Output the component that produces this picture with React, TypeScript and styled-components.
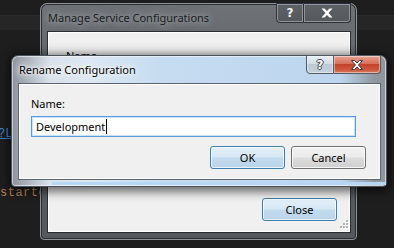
import React from 'react';
import styled, { createGlobalStyle, css } from 'styled-components';

const uiFont = `"Noto Sans", "Liberation Sans", sans-serif`;

const GlobalStyle = createGlobalStyle`
    html, body {
        margin: 0;
        padding: 0;
        background: #1e1e1e;
    }
`;

const Styled = {
    Desktop: styled.div`
        position: relative;
        width: 394px;
        height: 248px;
        overflow: hidden;
        background: #1e1e1e;
        font-family: ${uiFont};
    `,
    Editor: styled.div`
        display: flex;
        flex-direction: column;
        font-family: "Liberation Mono", "DejaVu Sans Mono", monospace;
        font-size: 12px;
    `,
    CurrentLine: styled.div`
        margin-top: 15px;
        height: 14px;
        background: #262626;
        border-top: 1px solid #2a2a2a;
    `,
    LinkLine: styled.div`
        margin-top: 97px;
        height: 14px;
        line-height: 14px;
        text-indent: -2px;
        color: #3d8fd8;
        text-decoration: underline;
    `,
    CodeLine: styled.div`
        margin-top: 45px;
        height: 14px;
        line-height: 14px;
        color: #c08457;
        letter-spacing: 0.5px;
    `,
    Frame: styled.div<{ $active?: boolean }>`
        position: absolute;
        box-sizing: border-box;
        display: flex;
        flex-direction: column;
        padding: 0 5px 6px 6px;
        border-radius: 7px 7px 4px 4px;
        ${(p) =>
            p.$active
                ? css`
                      border: 1px solid #4a525b;
                      background: linear-gradient(
                          to right,
                          #8c939b 0%,
                          #d9e1ea 10%,
                          #dde8f3 20%,
                          #c6dcf1 40%,
                          #bcd5ee 88%,
                          #8f969d 97%
                      );
                      box-shadow: inset 0 0 0 1px rgba(255, 255, 255, 0.55), 0 2px 10px 3px rgba(0, 0, 0, 0.55);
                  `
                : css`
                      border: 1px solid #8d9297;
                      background: linear-gradient(to bottom, #6f7378 0%, #5c6065 40%, #55595e 100%);
                      box-shadow: inset 0 0 0 1px #2a2d31;
                  `}
    `,
    BottomGlow: styled.div`
        position: absolute;
        left: 40px;
        right: 0;
        bottom: 1px;
        height: 3px;
        background: #b6d6f5;
    `,
    TitleBar: styled.div`
        height: 27px;
        display: flex;
        align-items: flex-start;
        justify-content: space-between;
    `,
    Title: styled.div<{ $active?: boolean }>`
        padding: 5px 0 0 1px;
        font-size: 11px;
        line-height: 17px;
        white-space: nowrap;
        color: ${(p) => (p.$active ? '#000' : '#1b1d20')};
        text-shadow: ${(p) =>
            p.$active
                ? '0 0 6px #fff, 0 0 10px #fff, 0 0 3px #fff'
                : '0 0 6px rgba(190, 195, 200, 0.8), 0 0 10px rgba(190, 195, 200, 0.6)'};
    `,
    CaptionButtons: styled.div`
        display: flex;
        margin-top: -1px;
    `,
    CaptionButton: styled.div<{ $active?: boolean; $kind: 'help' | 'close' }>`
        box-sizing: border-box;
        display: flex;
        align-items: center;
        justify-content: center;
        height: ${(p) => (p.$active ? 19 : 20)}px;
        width: ${(p) => (p.$kind === 'help' ? 28 : 47)}px;
        border-radius: ${(p) => (p.$kind === 'help' ? '0 0 0 4px' : '0 0 4px 0')};
        font-family: "DejaVu Sans", sans-serif;
        font-weight: bold;
        font-size: 12px;
        ${(p) =>
            p.$active
                ? css`
                      border: 1px solid #545a61;
                      color: #fff;
                      text-shadow: 1px 0 0 #444, -1px 0 0 #444, 0 1px 0 #444, 0 -1px 0 #444;
                      background: ${p.$kind === 'help'
                          ? 'linear-gradient(to bottom, #e7eef5 0%, #d3dde8 45%, #bccad8 50%, #c3d0dd 100%)'
                          : 'linear-gradient(to bottom, #e7a493 0%, #d6705a 45%, #c2432b 50%, #cd563c 80%, #d97b5f 100%)'};
                      box-shadow: inset 0 0 0 1px rgba(255, 255, 255, 0.45);
                  `
                : css`
                      border: 1px solid #2d3034;
                      color: #f4f4f4;
                      background: linear-gradient(to bottom, #5e6267 0%, #55595e 100%);
                      box-shadow: inset 0 0 0 1px #8f959b;
                  `}
        ${(p) =>
            p.$kind === 'close' &&
            css`
                border-left: none;
            `}
    `,
    Client: styled.div<{ $active?: boolean }>`
        position: relative;
        flex: 1;
        display: flex;
        flex-direction: column;
        background: #f0f0f0;
        border: 1px solid ${(p) => (p.$active ? '#5b6470' : '#2a2e32')};
        box-shadow: inset 0 0 0 1px #ffffff;
        font-size: 11px;
        color: #000;
    `,
    RenameBody: styled.div`
        display: flex;
        flex-direction: column;
        padding: 12px 14px 0 12px;
    `,
    Label: styled.div`
        font-size: 11px;
        line-height: 16px;
    `,
    TextBox: styled.div`
        box-sizing: border-box;
        margin: 4px 10px 0 0;
        height: 21px;
        display: flex;
        align-items: center;
        padding: 0 4px;
        background: #fff;
        border: 1px solid #5a9ddf;
        box-shadow: inset 0 0 0 1px #c7e2f8;
        font-size: 11px;
    `,
    Caret: styled.span`
        display: inline-block;
        width: 1px;
        height: 15px;
        margin-left: 1px;
        background: #000;
    `,
    ButtonRow: styled.div`
        display: flex;
        justify-content: flex-end;
        gap: 6px;
        margin-top: 9px;
    `,
    Button: styled.div<{ $default?: boolean }>`
        box-sizing: border-box;
        width: 75px;
        height: 23px;
        display: flex;
        align-items: center;
        justify-content: center;
        border-radius: 3px;
        font-size: 11px;
        color: #000;
        ${(p) =>
            p.$default
                ? css`
                      border: 1px solid #3c7fb1;
                      background: linear-gradient(to bottom, #e3f0f9 0%, #d6e8f5 48%, #c3dbee 52%, #b9d4ea 100%);
                      box-shadow: inset 0 0 0 1px rgba(255, 255, 255, 0.7);
                  `
                : css`
                      border: 1px solid #707070;
                      background: linear-gradient(to bottom, #f2f2f2 0%, #ebebeb 48%, #dddddd 52%, #cfcfcf 100%);
                      box-shadow: inset 0 0 0 1px rgba(255, 255, 255, 0.8);
                  `}
    `,
    ManageBody: styled.div`
        flex: 1;
        display: flex;
        flex-direction: column;
        justify-content: space-between;
        padding: 16px 13px 11px 18px;
    `,
    ManageFooter: styled.div`
        display: flex;
        justify-content: flex-end;
    `,
    Grip: styled.svg`
        position: absolute;
        right: 1px;
        bottom: 1px;
        display: block;
    `,
};

const CloseGlyph = ({ active }: { active?: boolean }) => (
    <svg width="12" height="10" viewBox="0 0 12 10">
        <polygon
            points="0.5,0.5 3.5,0.5 6,3 8.5,0.5 11.5,0.5 7.5,5 11.5,9.5 8.5,9.5 6,7 3.5,9.5 0.5,9.5 4.5,5"
            fill="#fff"
            stroke={active ? '#3a3a3a' : 'none'}
            strokeWidth="1"
            strokeLinejoin="round"
        />
    </svg>
);

const ResizeGrip = () => (
    <Styled.Grip width="11" height="11" viewBox="0 0 11 11">
        {[
            [8, 0],
            [8, 3],
            [5, 3],
            [8, 6],
            [5, 6],
            [2, 6],
        ].map(([x, y]) => (
            <g key={`${x}-${y}`}>
                <rect x={x + 1} y={y + 1} width="2" height="2" fill="#fff" />
                <rect x={x} y={y} width="2" height="2" fill="#b4b4b4" />
            </g>
        ))}
    </Styled.Grip>
);

type WindowProps = {
    title: string;
    active?: boolean;
    left: number;
    top: number;
    width: number;
    height: number;
    children: React.ReactNode;
};

const Window = ({ title, active, left, top, width, height, children }: WindowProps) => (
    <Styled.Frame $active={active} style={{ left, top, width, height }}>
        <Styled.TitleBar>
            <Styled.Title $active={active}>{title}</Styled.Title>
            <Styled.CaptionButtons>
                <Styled.CaptionButton $active={active} $kind="help">
                    ?
                </Styled.CaptionButton>
                <Styled.CaptionButton $active={active} $kind="close">
                    <CloseGlyph active={active} />
                </Styled.CaptionButton>
            </Styled.CaptionButtons>
        </Styled.TitleBar>
        <Styled.Client $active={active}>{children}</Styled.Client>
        {active && <Styled.BottomGlow />}
    </Styled.Frame>
);

const App = () => {
    return (
        <Styled.Desktop>
            <GlobalStyle />
            <Styled.Editor>
                <Styled.CurrentLine />
                <Styled.LinkLine>?L</Styled.LinkLine>
                <Styled.CodeLine>startet</Styled.CodeLine>
            </Styled.Editor>

            <Window title="Manage Service Configurations" left={40} top={3} width={317} height={237}>
                <Styled.ManageBody>
                    <Styled.Label>Name</Styled.Label>
                    <Styled.ManageFooter>
                        <Styled.Button $default>Close</Styled.Button>
                    </Styled.ManageFooter>
                </Styled.ManageBody>
                <ResizeGrip />
            </Window>

            <Window title="Rename Configuration" active left={11} top={55} width={376} height={132}>
                <Styled.RenameBody>
                    <Styled.Label>Name:</Styled.Label>
                    <Styled.TextBox>
                        Development
                        <Styled.Caret />
                    </Styled.TextBox>
                    <Styled.ButtonRow>
                        <Styled.Button $default>OK</Styled.Button>
                        <Styled.Button>Cancel</Styled.Button>
                    </Styled.ButtonRow>
                </Styled.RenameBody>
            </Window>
        </Styled.Desktop>
    );
};

export default App;
